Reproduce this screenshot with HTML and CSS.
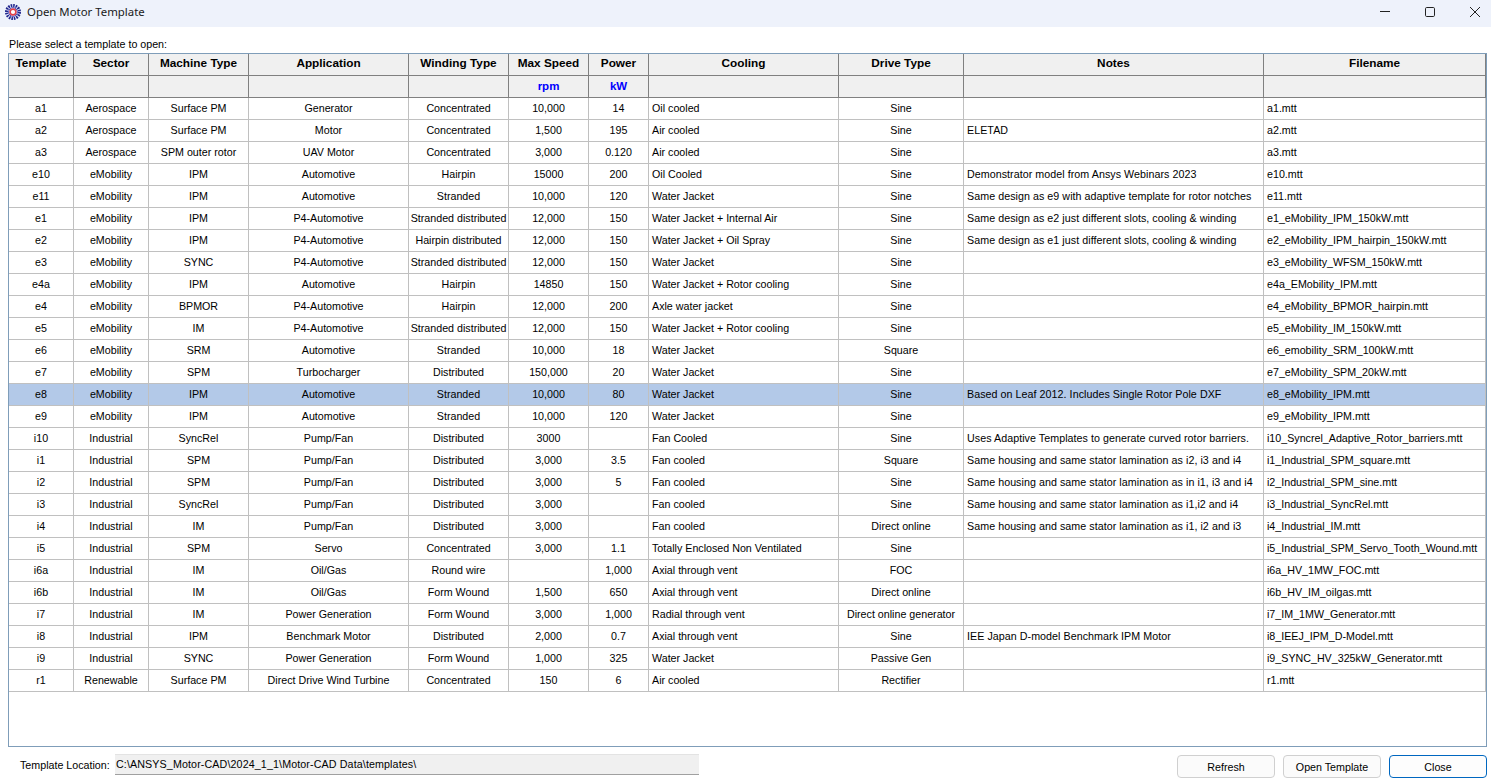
FILE: index.html
```html
<!DOCTYPE html>
<html lang="en">
<head>
<meta charset="utf-8">
<title>Open Motor Template</title>
<link rel="stylesheet" href="styles.css">
</head>
<body>
<div class="window">
  <header class="titlebar">
    <svg class="app-icon" width="16" height="16" viewBox="0 0 16 16">
      <circle cx="8" cy="8" r="6.5" fill="none" stroke="#23288f" stroke-width="3" stroke-dasharray="1.6 0.9"/>
      <circle cx="8" cy="8" r="4.4" fill="none" stroke="#4a52c0" stroke-width="1"/>
      <circle cx="8" cy="8" r="2.9" fill="#fff" stroke="#e0404a" stroke-width="1.6"/>
    </svg>
    <span class="title">Open Motor Template</span>
    <div class="controls">
      <svg class="ctl" width="16" height="16" viewBox="0 0 16 16"><path d="M3 7.5h10" stroke="#222" fill="none"/></svg>
      <svg class="ctl" width="16" height="16" viewBox="0 0 16 16"><rect x="3.5" y="3.5" width="9" height="9" rx="1.2" stroke="#222" fill="none"/></svg>
      <svg class="ctl" width="16" height="16" viewBox="0 0 16 16"><path d="M3 3l10 10M13 3L3 13" stroke="#222" fill="none"/></svg>
    </div>
  </header>
  <main class="content">
    <p class="prompt">Please select a template to open:</p>
    <div class="grid">
      <table>
        <colgroup>
          <col class="c1"><col class="c2"><col class="c3"><col class="c4"><col class="c5"><col class="c6"><col class="c7"><col class="c8"><col class="c9"><col class="c10"><col class="c11">
        </colgroup>
        <thead>
          <tr><th>Template</th><th>Sector</th><th>Machine Type</th><th>Application</th><th>Winding Type</th><th>Max Speed</th><th>Power</th><th>Cooling</th><th>Drive Type</th><th>Notes</th><th>Filename</th></tr>
          <tr class="units"><th></th><th></th><th></th><th></th><th></th><th>rpm</th><th>kW</th><th></th><th></th><th></th><th></th></tr>
        </thead>
        <tbody>
          <tr><td>a1</td><td>Aerospace</td><td>Surface PM</td><td>Generator</td><td>Concentrated</td><td>10,000</td><td>14</td><td>Oil cooled</td><td>Sine</td><td></td><td>a1.mtt</td></tr>
          <tr><td>a2</td><td>Aerospace</td><td>Surface PM</td><td>Motor</td><td>Concentrated</td><td>1,500</td><td>195</td><td>Air cooled</td><td>Sine</td><td>ELETAD</td><td>a2.mtt</td></tr>
          <tr><td>a3</td><td>Aerospace</td><td>SPM outer rotor</td><td>UAV Motor</td><td>Concentrated</td><td>3,000</td><td>0.120</td><td>Air cooled</td><td>Sine</td><td></td><td>a3.mtt</td></tr>
          <tr><td>e10</td><td>eMobility</td><td>IPM</td><td>Automotive</td><td>Hairpin</td><td>15000</td><td>200</td><td>Oil Cooled</td><td>Sine</td><td>Demonstrator model from Ansys Webinars 2023</td><td>e10.mtt</td></tr>
          <tr><td>e11</td><td>eMobility</td><td>IPM</td><td>Automotive</td><td>Stranded</td><td>10,000</td><td>120</td><td>Water Jacket</td><td>Sine</td><td>Same design as e9 with adaptive template for rotor notches</td><td>e11.mtt</td></tr>
          <tr><td>e1</td><td>eMobility</td><td>IPM</td><td>P4-Automotive</td><td>Stranded distributed</td><td>12,000</td><td>150</td><td>Water Jacket + Internal Air</td><td>Sine</td><td>Same design as e2 just different slots, cooling &amp; winding</td><td>e1_eMobility_IPM_150kW.mtt</td></tr>
          <tr><td>e2</td><td>eMobility</td><td>IPM</td><td>P4-Automotive</td><td>Hairpin distributed</td><td>12,000</td><td>150</td><td>Water Jacket + Oil Spray</td><td>Sine</td><td>Same design as e1 just different slots, cooling &amp; winding</td><td>e2_eMobility_IPM_hairpin_150kW.mtt</td></tr>
          <tr><td>e3</td><td>eMobility</td><td>SYNC</td><td>P4-Automotive</td><td>Stranded distributed</td><td>12,000</td><td>150</td><td>Water Jacket</td><td>Sine</td><td></td><td>e3_eMobility_WFSM_150kW.mtt</td></tr>
          <tr><td>e4a</td><td>eMobility</td><td>IPM</td><td>Automotive</td><td>Hairpin</td><td>14850</td><td>150</td><td>Water Jacket + Rotor cooling</td><td>Sine</td><td></td><td>e4a_EMobility_IPM.mtt</td></tr>
          <tr><td>e4</td><td>eMobility</td><td>BPMOR</td><td>P4-Automotive</td><td>Hairpin</td><td>12,000</td><td>200</td><td>Axle water jacket</td><td>Sine</td><td></td><td>e4_eMobility_BPMOR_hairpin.mtt</td></tr>
          <tr><td>e5</td><td>eMobility</td><td>IM</td><td>P4-Automotive</td><td>Stranded distributed</td><td>12,000</td><td>150</td><td>Water Jacket + Rotor cooling</td><td>Sine</td><td></td><td>e5_eMobility_IM_150kW.mtt</td></tr>
          <tr><td>e6</td><td>eMobility</td><td>SRM</td><td>Automotive</td><td>Stranded</td><td>10,000</td><td>18</td><td>Water Jacket</td><td>Square</td><td></td><td>e6_emobility_SRM_100kW.mtt</td></tr>
          <tr><td>e7</td><td>eMobility</td><td>SPM</td><td>Turbocharger</td><td>Distributed</td><td>150,000</td><td>20</td><td>Water Jacket</td><td>Sine</td><td></td><td>e7_eMobility_SPM_20kW.mtt</td></tr>
          <tr class="selected"><td>e8</td><td>eMobility</td><td>IPM</td><td>Automotive</td><td>Stranded</td><td>10,000</td><td>80</td><td>Water Jacket</td><td>Sine</td><td>Based on Leaf 2012. Includes Single Rotor Pole DXF</td><td>e8_eMobility_IPM.mtt</td></tr>
          <tr><td>e9</td><td>eMobility</td><td>IPM</td><td>Automotive</td><td>Stranded</td><td>10,000</td><td>120</td><td>Water Jacket</td><td>Sine</td><td></td><td>e9_eMobility_IPM.mtt</td></tr>
          <tr><td>i10</td><td>Industrial</td><td>SyncRel</td><td>Pump/Fan</td><td>Distributed</td><td>3000</td><td></td><td>Fan Cooled</td><td>Sine</td><td>Uses Adaptive Templates to generate curved rotor barriers.</td><td>i10_Syncrel_Adaptive_Rotor_barriers.mtt</td></tr>
          <tr><td>i1</td><td>Industrial</td><td>SPM</td><td>Pump/Fan</td><td>Distributed</td><td>3,000</td><td>3.5</td><td>Fan cooled</td><td>Square</td><td>Same housing and same stator lamination as i2, i3 and i4</td><td>i1_Industrial_SPM_square.mtt</td></tr>
          <tr><td>i2</td><td>Industrial</td><td>SPM</td><td>Pump/Fan</td><td>Distributed</td><td>3,000</td><td>5</td><td>Fan cooled</td><td>Sine</td><td>Same housing and same stator lamination as in i1, i3 and i4</td><td>i2_Industrial_SPM_sine.mtt</td></tr>
          <tr><td>i3</td><td>Industrial</td><td>SyncRel</td><td>Pump/Fan</td><td>Distributed</td><td>3,000</td><td></td><td>Fan cooled</td><td>Sine</td><td>Same housing and same stator lamination as i1,i2 and i4</td><td>i3_Industrial_SyncRel.mtt</td></tr>
          <tr><td>i4</td><td>Industrial</td><td>IM</td><td>Pump/Fan</td><td>Distributed</td><td>3,000</td><td></td><td>Fan cooled</td><td>Direct online</td><td>Same housing and same stator lamination as i1, i2 and i3</td><td>i4_Industrial_IM.mtt</td></tr>
          <tr><td>i5</td><td>Industrial</td><td>SPM</td><td>Servo</td><td>Concentrated</td><td>3,000</td><td>1.1</td><td>Totally Enclosed Non Ventilated</td><td>Sine</td><td></td><td>i5_Industrial_SPM_Servo_Tooth_Wound.mtt</td></tr>
          <tr><td>i6a</td><td>Industrial</td><td>IM</td><td>Oil/Gas</td><td>Round wire</td><td></td><td>1,000</td><td>Axial through vent</td><td>FOC</td><td></td><td>i6a_HV_1MW_FOC.mtt</td></tr>
          <tr><td>i6b</td><td>Industrial</td><td>IM</td><td>Oil/Gas</td><td>Form Wound</td><td>1,500</td><td>650</td><td>Axial through vent</td><td>Direct online</td><td></td><td>i6b_HV_IM_oilgas.mtt</td></tr>
          <tr><td>i7</td><td>Industrial</td><td>IM</td><td>Power Generation</td><td>Form Wound</td><td>3,000</td><td>1,000</td><td>Radial through vent</td><td>Direct online generator</td><td></td><td>i7_IM_1MW_Generator.mtt</td></tr>
          <tr><td>i8</td><td>Industrial</td><td>IPM</td><td>Benchmark Motor</td><td>Distributed</td><td>2,000</td><td>0.7</td><td>Axial through vent</td><td>Sine</td><td>IEE Japan D-model Benchmark IPM Motor</td><td>i8_IEEJ_IPM_D-Model.mtt</td></tr>
          <tr><td>i9</td><td>Industrial</td><td>SYNC</td><td>Power Generation</td><td>Form Wound</td><td>1,000</td><td>325</td><td>Water Jacket</td><td>Passive Gen</td><td></td><td>i9_SYNC_HV_325kW_Generator.mtt</td></tr>
          <tr><td>r1</td><td>Renewable</td><td>Surface PM</td><td>Direct Drive Wind Turbine</td><td>Concentrated</td><td>150</td><td>6</td><td>Air cooled</td><td>Rectifier</td><td></td><td>r1.mtt</td></tr>
        </tbody>
      </table>
    </div>
    <footer class="footer">
      <span class="loc-label">Template Location:</span>
      <div class="loc-box">C:\ANSYS_Motor-CAD\2024_1_1\Motor-CAD Data\templates\</div>
      <div class="buttons">
        <button class="btn" type="button">Refresh</button>
        <button class="btn" type="button">Open Template</button>
        <button class="btn primary" type="button">Close</button>
      </div>
    </footer>
  </main>
</div>
</body>
</html>
```
FILE: styles.css
```css
* { box-sizing: border-box; }
html, body { margin: 0; padding: 0; height: 100%; overflow: hidden; }
body { background: #fff; color: #000; font: 10.7px/14px "Liberation Sans", Arial, sans-serif; }
.window { display: flex; flex-direction: column; width: 1491px; height: 778px; }

.titlebar { display: flex; align-items: center; height: 27px; flex: none; background: #eef2fb; padding: 0 8px 3px 5px; }
.app-icon { flex: none; margin-right: 6px; }
.title { font: 11.4px/16px "Noto Sans", sans-serif; color: #1a1a1a; }
.controls { display: flex; gap: 29px; margin-left: auto; }
.ctl { display: block; }

.content { flex: 1; display: flex; flex-direction: column; padding: 0 4px 1px 8px; min-height: 0; }
.prompt { margin: 10px 0 2px 1px; height: 14px; }
.grid { flex: none; height: 694px; border: 1px solid #7f9db9; background: #fff; overflow: hidden; }

table { table-layout: fixed; border-collapse: separate; border-spacing: 0; width: 1477px; }
.c1 { width: 65px; } .c2 { width: 75px; } .c3 { width: 100px; } .c4 { width: 160px; }
.c5 { width: 100px; } .c6 { width: 80px; } .c7 { width: 60px; } .c8 { width: 190px; }
.c9 { width: 125px; } .c10 { width: 300px; } .c11 { width: 222px; }

th, td { height: 22px; padding: 0 1px 2px; white-space: nowrap; overflow: hidden; text-align: center; vertical-align: middle; line-height: 14px; }
th { background: #f0f0f0; border-right: 1px solid #808080; border-bottom: 1px solid #808080; font-weight: bold; font-size: 11.8px; padding-bottom: 3px; }
td { font-size: 10.7px; border-right: 1px solid #c0c0c0; border-bottom: 1px solid #c0c0c0; }
td:nth-child(8), td:nth-child(10), td:nth-child(11) { text-align: left; padding-left: 3px; }
td:nth-child(10) { letter-spacing: 0.05px; }
.units th { color: #0000ff; font-size: 11.5px; padding-bottom: 2px; }
.selected td { background: #b3c9e8; }

.footer { display: flex; align-items: flex-start; height: 24px; margin-top: 7px; }
.loc-label { margin-left: 12px; width: 95px; flex: none; padding-top: 4px; }
.loc-box { width: 584px; height: 21px; padding: 0 1px; line-height: 19px; letter-spacing: 0.12px; background: #f0f0f0; border-bottom: 1px solid #a0a0a0; border-top: 1px solid #e3e3e3; }
.buttons { display: flex; gap: 8px; margin-left: auto; margin-top: 1px; margin-right: 0; }
.btn { width: 98px; height: 23px; padding: 0; font: 10.7px/14px "Liberation Sans", Arial, sans-serif; color: #000; background: #fbfbfb; border: 1px solid #d0d0d0; border-radius: 4px; }
.btn.primary { background: #fdfdfd; border: 1px solid #0067c0; }
```
